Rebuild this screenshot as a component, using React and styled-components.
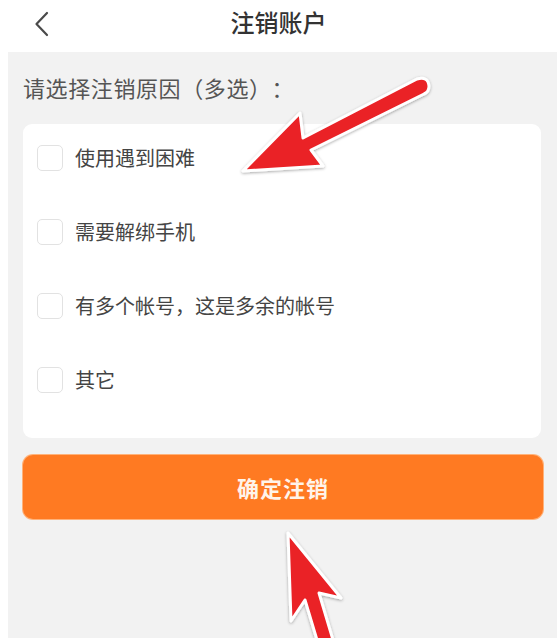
import React from "react";
import styled, { createGlobalStyle } from "styled-components";

const Global = createGlobalStyle`
  html, body { margin: 0; padding: 0; background: #ffffff; }
  body { font-family: "Noto Sans CJK SC", "Noto Sans", sans-serif; text-spacing-trim: space-all; }
  * { box-sizing: border-box; }
`;

const Page = styled.div`
  position: relative;
  width: 557px;
  height: 638px;
  overflow: hidden;
  background: #ffffff;
  display: flex;
  flex-direction: column;
`;

const Header = styled.header`
  height: 52px;
  display: grid;
  grid-template-columns: 80px 1fr 80px;
  align-items: center;
  background: #ffffff;
`;

const BackButton = styled.div`
  padding-left: 34px;
  display: flex;
  align-items: center;
  height: 100%;
  padding-bottom: 4px;
`;

const Title = styled.h1`
  margin: 0;
  text-align: center;
  font-size: 24px;
  font-weight: 500;
  color: #333333;
  line-height: 1;
  padding-bottom: 8px;
`;

const Body = styled.main`
  flex: 1;
  margin-left: 8px;
  background: #f2f2f2;
  padding: 0 15px 0 15px;
  display: flex;
  flex-direction: column;
`;

const SectionLabel = styled.div`
  height: 72px;
  display: flex;
  align-items: center;
  padding-bottom: 2px;
  font-size: 22px;
  color: #555555;
  letter-spacing: 0.6px;
  text-spacing-trim: space-all;
`;

const Card = styled.section`
  background: #ffffff;
  border-radius: 9px;
  margin-right: 1px;
  padding: 10px 14px 34px 14px;
  display: flex;
  flex-direction: column;
  gap: 26px;
`;

const Row = styled.label`
  height: 48px;
  display: flex;
  align-items: center;
  gap: 12px;
`;

const Box = styled.span`
  width: 26px;
  height: 26px;
  border: 1.5px solid #e2e2e2;
  border-radius: 5px;
  background: #ffffff;
  flex: none;
`;

const RowText = styled.span`
  font-size: 20px;
  color: #444444;
  line-height: 1;
`;

const ConfirmButton = styled.button`
  margin-top: 17px;
  margin-left: 0;
  margin-right: -1px;
  height: 64px;
  border: none;
  border-radius: 10px;
  background: #ff7a22;
  box-shadow: 0 0 0 1px #ffb27a;
  color: #fff4ea;
  font-family: "Noto Sans CJK SC", sans-serif;
  font-size: 22px;
  font-weight: 700;
  letter-spacing: 1px;
  display: flex;
  align-items: center;
  justify-content: center;
  padding-bottom: 2px;
`;

const Overlay = styled.svg`
  position: absolute;
  left: 0;
  top: 0;
  pointer-events: none;
`;

const reasons = [
  "使用遇到困难",
  "需要解绑手机",
  "有多个帐号，这是多余的帐号",
  "其它",
];

export default function App() {
  return (
    <>
      <Global />
      <Page>
        <Header>
          <BackButton>
            <svg width="16" height="26" viewBox="0 0 16 26">
              <path d="M13 2 L2.5 13 L13 24" fill="none" stroke="#4a4a4a" strokeWidth="2.2" strokeLinecap="round" strokeLinejoin="round" />
            </svg>
          </BackButton>
          <Title>注销账户</Title>
          <div />
        </Header>
        <Body>
          <SectionLabel>请选择注销原因（多选）：</SectionLabel>
          <Card>
            {reasons.map((r) => (
              <Row key={r}>
                <Box />
                <RowText>{r}</RowText>
              </Row>
            ))}
          </Card>
          <ConfirmButton>确定注销</ConfirmButton>
        </Body>
        <Overlay width="557" height="638" viewBox="0 0 557 638">
          <defs>
            <filter id="sh" x="-20%" y="-20%" width="140%" height="140%">
              <feDropShadow dx="0" dy="1" stdDeviation="1.5" floodColor="#000" floodOpacity="0.35" />
            </filter>
          </defs>
          <g filter="url(#sh)">
            <path
              d="M243 171 L300 113 L303 138 L417 79 Q428 76 429 86 Q429 92 424 94 L311 150 L323 166 Z"
              fill="#ea2027"
              stroke="#ffffff"
              strokeWidth="3"
              strokeLinejoin="round"
            />
            <path
              d="M288 533 L341 598 L319 593 L336 650 L320 650 L305 600 L291 621 Z"
              fill="#ea2027"
              stroke="#ffffff"
              strokeWidth="3"
              strokeLinejoin="round"
            />
          </g>
        </Overlay>
      </Page>
    </>
  );
}
